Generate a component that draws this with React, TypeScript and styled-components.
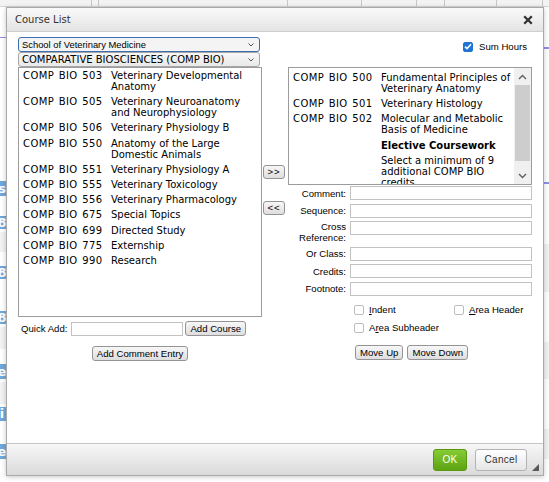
import React from "react";
import styled, { createGlobalStyle, css } from "styled-components";

const GlobalStyle = createGlobalStyle`
  *, *::before, *::after { box-sizing: border-box; }
  html, body { margin: 0; padding: 0; background: #ffffff; }
  body { width: 549px; height: 482px; overflow: hidden; font-family: "Liberation Sans", Arial, sans-serif; }
`;

const UI = `"Liberation Sans", Arial, sans-serif`;
const VERD = `"DejaVu Sans", Verdana, sans-serif`;

/* ---------- background page ---------- */
const Page = styled.div`
  position: relative;
  width: 549px;
  height: 482px;
  overflow: hidden;
  background: #fff;
  display: flex;
  flex-direction: column;
`;

const Toolbar = styled.div`
  height: 7px;
  flex: none;
  display: flex;
  background: #f3f3f3;
  border-bottom: 1px solid #d6d6d6;
`;

const ToolSeg = styled.div<{ $w: number }>`
  width: ${(p) => p.$w}px;
  flex: none;
  border-right: 1px solid #c6c6c6;
`;

const Backdrop = styled.div`
  flex: 1;
  display: flex;
  justify-content: space-between;
`;

const BgCol = styled.div`
  width: 24px;
  display: flex;
  flex-direction: column;
  overflow: hidden;
`;

type BlockKind = "space" | "line" | "band" | "badge";

const BgBlock = styled.div<{ $h: number; $kind: BlockKind }>`
  height: ${(p) => p.$h}px;
  flex: none;
  ${(p) =>
    p.$kind === "line" &&
    css`
      background: #8f8fe6;
    `}
  ${(p) =>
    p.$kind === "band" &&
    css`
      background: #f2f2f2;
    `}
  ${(p) =>
    p.$kind === "badge" &&
    css`
      width: 16px;
      margin-left: -6px;
      background: #6fa8dc;
      color: #fff;
      font: bold 13px / ${p.$h}px ${VERD};
      text-align: center;
      border-radius: 2px;
    `}
`;

type Block = { h: number; kind: BlockKind; text?: string };

const leftBlocks: Block[] = [
  { h: 30, kind: "space" },
  { h: 1, kind: "line" },
  { h: 143, kind: "space" },
  { h: 15, kind: "badge", text: "s" },
  { h: 20, kind: "space" },
  { h: 13, kind: "badge", text: "8" },
  { h: 3, kind: "space" },
  { h: 20, kind: "band" },
  { h: 14, kind: "space" },
  { h: 13, kind: "badge", text: "8" },
  { h: 32, kind: "space" },
  { h: 13, kind: "badge", text: "8" },
  { h: 3, kind: "space" },
  { h: 22, kind: "band" },
  { h: 15, kind: "space" },
  { h: 15, kind: "badge", text: "e" },
  { h: 3, kind: "space" },
  { h: 22, kind: "band" },
  { h: 3, kind: "space" },
  { h: 14, kind: "badge", text: "i" },
  { h: 23, kind: "space" },
  { h: 15, kind: "badge", text: "e" },
];

const rightBlocks: Block[] = [
  { h: 40, kind: "space" },
  { h: 2, kind: "line" },
  { h: 133, kind: "space" },
  { h: 2, kind: "line" },
  { h: 60, kind: "space" },
  { h: 48, kind: "band" },
  { h: 50, kind: "space" },
  { h: 37, kind: "band" },
  { h: 50, kind: "space" },
  { h: 30, kind: "band" },
];

/* ---------- dialog ---------- */
const Dialog = styled.div`
  position: absolute;
  left: 6px;
  top: 7px;
  width: 538px;
  height: 469px;
  background: #fff;
  border: 1px solid #a9a9a9;
  box-shadow: 0 1px 5px rgba(0, 0, 0, 0.22);
  display: flex;
  flex-direction: column;
  font-family: ${UI};
`;

const TitleBar = styled.div`
  height: 24px;
  flex: none;
  display: flex;
  align-items: center;
  justify-content: space-between;
  padding: 0 10px 0 8px;
  background: linear-gradient(#f9f9f9, #e4e4e4);
  border-bottom: 1px solid #cfcfcf;
`;

const Title = styled.span`
  font: 10px/12px ${VERD};
  color: #333;
`;

const CloseBtn = styled.span`
  display: flex;
  width: 10px;
  height: 10px;
`;

const Body = styled.div`
  flex: 1;
  padding: 5px 11px 0 11px;
  display: flex;
  flex-direction: column;
`;

const Columns = styled.div`
  display: grid;
  grid-template-columns: 244px 26px 244px;
`;

const SelectStack = styled.div`
  display: flex;
  flex-direction: column;
`;

const SelectBox = styled.div<{ $focused?: boolean; $verdana?: boolean }>`
  width: 242px;
  height: 15px;
  display: flex;
  align-items: center;
  justify-content: space-between;
  padding: 0 5px 0 3px;
  border: 1px solid ${(p) => (p.$focused ? "#3d6eb0" : "#a6a6a6")};
  border-radius: 3px;
  background: ${(p) => (p.$focused ? "#f4f4f4" : "linear-gradient(#f7f7f7, #e9e9e9)")};
  color: #000;
  font: ${(p) => (p.$verdana ? `10px/12px ${VERD}` : `9.4px/12px ${UI}`)};
  white-space: nowrap;
`;

const SumCell = styled.div`
  display: flex;
  justify-content: flex-end;
  align-items: center;
  gap: 6px;
  padding: 4px 5px 0 0;
  align-self: start;
  font-size: 9.6px;
  line-height: 11px;
  color: #000;
`;

const Check = styled.span<{ $checked?: boolean }>`
  width: 10px;
  height: 10px;
  flex: none;
  display: flex;
  align-items: center;
  justify-content: center;
  border-radius: 2px;
  border: 1px solid ${(p) => (p.$checked ? "#1f74d4" : "#bdbdbd")};
  background: ${(p) => (p.$checked ? "#1f74d4" : "#fff")};
`;

const LeftCol = styled.div`
  display: flex;
  flex-direction: column;
`;

const ListBox = styled.div`
  height: 250px;
  border: 1px solid #9c9c9c;
  background: #fff;
  padding: 0 6px 0 4px;
  overflow: hidden;
`;

const CourseRow = styled.div`
  display: flex;
  padding: 2px 0 2.2px;
  font: 10px/11px ${VERD};
  color: #000;
`;

const Code = styled.span`
  width: 88px;
  flex: none;
  white-space: nowrap;
  letter-spacing: 0.4px;
  word-spacing: 1px;
`;

const CourseTitle = styled.span<{ $bold?: boolean }>`
  flex: 1;
  min-width: 0;
  font-weight: ${(p) => (p.$bold ? 700 : 400)};
`;

const QuickRow = styled.div`
  margin-top: 4px;
  padding-left: 3px;
  display: flex;
  align-items: center;
`;

const InlineLabel = styled.span`
  font-size: 9.6px;
  line-height: 11px;
  margin-right: 4px;
`;

const TextBox = styled.input<{ $w?: number }>`
  width: ${(p) => (p.$w ? `${p.$w}px` : "100%")};
  height: 14px;
  margin: 0;
  padding: 0 2px;
  border: 1px solid #c2c2c2;
  border-radius: 0;
  background: #fff;
  outline: none;
  font: 9.6px ${UI};
`;

const Btn = styled.button`
  height: 15px;
  margin: 0;
  padding: 0 4px;
  border: 1px solid #949494;
  border-radius: 3px;
  background: linear-gradient(#f7f7f7, #dedede);
  color: #000;
  font: 9.6px/13px ${UI};
  white-space: nowrap;
`;

const CenterRow = styled.div`
  margin-top: 10px;
  display: flex;
  justify-content: center;
`;

const MidCol = styled.div`
  padding: 98px 0 0 1px;
  display: flex;
  flex-direction: column;
  align-items: flex-start;
  gap: 22px;
`;

const ArrowBtn = styled(Btn)`
  width: 22px;
  height: 14px;
  padding: 0;
  line-height: 12px;
  letter-spacing: 1px;
`;

const RightCol = styled.div`
  display: flex;
  flex-direction: column;
`;

const ScrollList = styled.div`
  height: 118px;
  display: flex;
  border: 1px solid #9c9c9c;
  background: #fff;
`;

const ScrollContent = styled.div`
  flex: 1;
  min-width: 0;
  overflow: hidden;
  padding: 2px 0 0 4px;
`;

const Scrollbar = styled.div`
  width: 17px;
  flex: none;
  display: flex;
  flex-direction: column;
  background: #f0f0f0;
`;

const ScrollArrow = styled.div`
  height: 17px;
  flex: none;
  display: flex;
  align-items: center;
  justify-content: center;
`;

const ScrollTrack = styled.div`
  flex: 1;
  display: flex;
  flex-direction: column;
`;

const ScrollThumb = styled.div`
  height: 76px;
  margin: 0 1px;
  background: #cdcdcd;
`;

const Form = styled.div`
  margin-top: 1px;
  display: grid;
  grid-template-columns: 58px 182px;
  column-gap: 4px;
  row-gap: 3.5px;
  align-items: center;
`;

const FieldLabel = styled.label`
  text-align: right;
  font-size: 9.6px;
  line-height: 11px;
  color: #000;
  white-space: nowrap;
`;

const TopBox = styled(TextBox)`
  align-self: start;
`;

const Checks = styled.div`
  margin: 9px 0 0 62px;
  display: grid;
  grid-template-columns: 100px 82px;
  row-gap: 8px;
`;

const CheckItem = styled.label`
  display: flex;
  align-items: center;
  gap: 5px;
  padding-left: 4px;
  font-size: 9.6px;
  line-height: 10px;
  color: #000;
  white-space: nowrap;
`;

const MoveRow = styled.div`
  margin: 12px 0 0 67px;
  display: flex;
  gap: 4px;
`;

const Footer = styled.div`
  position: relative;
  height: 32px;
  flex: none;
  display: flex;
  align-items: center;
  justify-content: flex-end;
  gap: 8px;
  padding-right: 16px;
  border-top: 1px solid #c4c4c4;
  background: linear-gradient(#f7f7f7, #dadada);
`;

const FootBtn = styled.button<{ $primary?: boolean }>`
  height: 22px;
  margin: 0;
  padding: 0;
  border-radius: 3px;
  font: 10px/20px ${UI};
  letter-spacing: 0.3px;
  ${(p) =>
    p.$primary
      ? css`
          width: 34px;
          border: 1px solid #57980f;
          background: linear-gradient(#86cc35, #5da312);
          color: #fff;
        `
      : css`
          width: 52px;
          border: 1px solid #b4b4b4;
          background: linear-gradient(#ffffff, #e6e6e6);
          color: #333;
        `}
`;

const Grip = styled.span`
  position: absolute;
  right: 4px;
  bottom: 4px;
  display: flex;
`;

type Course = { code: string; title: string; bold?: boolean };

const available: Course[] = [
  { code: "COMP BIO 503", title: "Veterinary Developmental Anatomy" },
  { code: "COMP BIO 505", title: "Veterinary Neuroanatomy and Neurophysiology" },
  { code: "COMP BIO 506", title: "Veterinary Physiology B" },
  { code: "COMP BIO 550", title: "Anatomy of the Large Domestic Animals" },
  { code: "COMP BIO 551", title: "Veterinary Physiology A" },
  { code: "COMP BIO 555", title: "Veterinary Toxicology" },
  { code: "COMP BIO 556", title: "Veterinary Pharmacology" },
  { code: "COMP BIO 675", title: "Special Topics" },
  { code: "COMP BIO 699", title: "Directed Study" },
  { code: "COMP BIO 775", title: "Externship" },
  { code: "COMP BIO 990", title: "Research" },
];

const selected: Course[] = [
  { code: "COMP BIO 500", title: "Fundamental Principles of Veterinary Anatomy" },
  { code: "COMP BIO 501", title: "Veterinary Histology" },
  { code: "COMP BIO 502", title: "Molecular and Metabolic Basis of Medicine" },
  { code: "", title: "Elective Coursework", bold: true },
  { code: "", title: "Select a minimum of 9 additional COMP BIO credits." },
];

const toolSegs = [92, 7, 189, 74, 55, 28, 52, 46];

const Chevron = ({ up }: { up?: boolean }) => (
  <svg width="9" height="6" viewBox="0 0 9 6">
    <path
      d={up ? "M1 5 L4.5 1.5 L8 5" : "M1 1 L4.5 4.5 L8 1"}
      fill="none"
      stroke="#606060"
      strokeWidth="1.4"
    />
  </svg>
);

const SmallChevron = () => (
  <svg width="6" height="4" viewBox="0 0 6 4">
    <path d="M0.5 0.5 L3 3 L5.5 0.5" fill="none" stroke="#555" strokeWidth="1" />
  </svg>
);

const CourseItem = ({ c }: { c: Course }) => (
  <CourseRow>
    <Code>{c.code}</Code>
    <CourseTitle $bold={c.bold}>{c.title}</CourseTitle>
  </CourseRow>
);

export default function App() {
  return (
    <>
      <GlobalStyle />
      <Page>
        <Toolbar>
          {toolSegs.map((w, i) => (
            <ToolSeg key={i} $w={w} />
          ))}
        </Toolbar>
        <Backdrop>
          <BgCol>
            {leftBlocks.map((b, i) => (
              <BgBlock key={i} $h={b.h} $kind={b.kind}>
                {b.text}
              </BgBlock>
            ))}
          </BgCol>
          <BgCol>
            {rightBlocks.map((b, i) => (
              <BgBlock key={i} $h={b.h} $kind={b.kind} />
            ))}
          </BgCol>
        </Backdrop>

        <Dialog>
          <TitleBar>
            <Title>Course List</Title>
            <CloseBtn>
              <svg width="10" height="10" viewBox="0 0 10 10">
                <path d="M1.2 1.2 L8.8 8.8 M8.8 1.2 L1.2 8.8" stroke="#333" strokeWidth="2.3" />
              </svg>
            </CloseBtn>
          </TitleBar>

          <Body>
            <Columns>
              <SelectStack>
                <SelectBox $focused>
                  <span>School of Veterinary Medicine</span>
                  <SmallChevron />
                </SelectBox>
                <SelectBox $verdana>
                  <span>COMPARATIVE BIOSCIENCES (COMP BIO)</span>
                  <SmallChevron />
                </SelectBox>
              </SelectStack>
              <div />
              <SumCell>
                <Check $checked>
                  <svg width="8" height="7" viewBox="0 0 8 7">
                    <path d="M1 3.6 L3 5.6 L7 1.2" fill="none" stroke="#fff" strokeWidth="1.5" />
                  </svg>
                </Check>
                <span>Sum Hours</span>
              </SumCell>
            </Columns>

            <Columns>
              <LeftCol>
                <ListBox>
                  {available.map((c) => (
                    <CourseItem key={c.code} c={c} />
                  ))}
                </ListBox>
                <QuickRow>
                  <InlineLabel>Quick Add:</InlineLabel>
                  <TextBox $w={112} />
                  <Btn style={{ marginLeft: 2 }}>Add Course</Btn>
                </QuickRow>
                <CenterRow>
                  <Btn>Add Comment Entry</Btn>
                </CenterRow>
              </LeftCol>

              <MidCol>
                <ArrowBtn>&gt;&gt;</ArrowBtn>
                <ArrowBtn>&lt;&lt;</ArrowBtn>
              </MidCol>

              <RightCol>
                <ScrollList>
                  <ScrollContent>
                    {selected.map((c, i) => (
                      <CourseItem key={i} c={c} />
                    ))}
                  </ScrollContent>
                  <Scrollbar>
                    <ScrollArrow>
                      <Chevron up />
                    </ScrollArrow>
                    <ScrollTrack>
                      <ScrollThumb />
                    </ScrollTrack>
                    <ScrollArrow>
                      <Chevron />
                    </ScrollArrow>
                  </Scrollbar>
                </ScrollList>

                <Form>
                  <FieldLabel>Comment:</FieldLabel>
                  <TextBox />
                  <FieldLabel>Sequence:</FieldLabel>
                  <TextBox />
                  <FieldLabel>
                    Cross
                    <br />
                    Reference:
                  </FieldLabel>
                  <TopBox />
                  <FieldLabel>Or Class:</FieldLabel>
                  <TextBox />
                  <FieldLabel>Credits:</FieldLabel>
                  <TextBox />
                  <FieldLabel>Footnote:</FieldLabel>
                  <TextBox />
                </Form>

                <Checks>
                  <CheckItem>
                    <Check />
                    <span>
                      <u>I</u>ndent
                    </span>
                  </CheckItem>
                  <CheckItem>
                    <Check />
                    <span>
                      <u>A</u>rea Header
                    </span>
                  </CheckItem>
                  <CheckItem>
                    <Check />
                    <span>
                      A<u>r</u>ea Subheader
                    </span>
                  </CheckItem>
                </Checks>

                <MoveRow>
                  <Btn>Move Up</Btn>
                  <Btn>Move Down</Btn>
                </MoveRow>
              </RightCol>
            </Columns>
          </Body>

          <Footer>
            <FootBtn $primary>OK</FootBtn>
            <FootBtn>Cancel</FootBtn>
            <Grip>
              <svg width="7" height="7" viewBox="0 0 7 7">
                <polygon points="7,0 7,7 0,7" fill="#595959" />
              </svg>
            </Grip>
          </Footer>
        </Dialog>
      </Page>
    </>
  );
}
